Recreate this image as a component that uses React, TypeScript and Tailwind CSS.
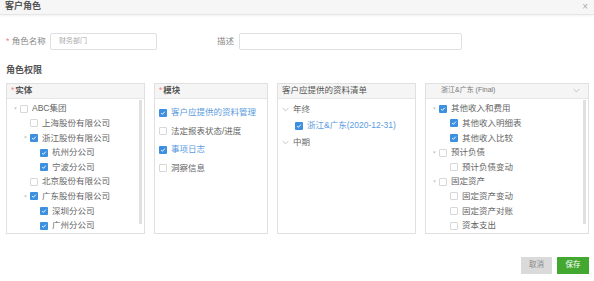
import React from "react";

type Node = { label: string; level: number; arrow?: boolean; checked?: boolean };

const entityTree: Node[] = [
  { label: "ABC集团", level: 0, arrow: true, checked: false },
  { label: "上海股份有限公司", level: 1, checked: false },
  { label: "浙江股份有限公司", level: 1, arrow: true, checked: true },
  { label: "杭州分公司", level: 2, checked: true },
  { label: "宁波分公司", level: 2, checked: true },
  { label: "北京股份有限公司", level: 1, checked: false },
  { label: "广东股份有限公司", level: 1, arrow: true, checked: true },
  { label: "深圳分公司", level: 2, checked: true },
  { label: "广州分公司", level: 2, checked: true },
];

const reportTree: Node[] = [
  { label: "其他收入和费用", level: 0, arrow: true, checked: true },
  { label: "其他收入明细表", level: 1, checked: true },
  { label: "其他收入比较", level: 1, checked: true },
  { label: "预计负债", level: 0, arrow: true, checked: false },
  { label: "预计负债变动", level: 1, checked: false },
  { label: "固定资产", level: 0, arrow: true, checked: false },
  { label: "固定资产变动", level: 1, checked: false },
  { label: "固定资产对账", level: 1, checked: false },
  { label: "资本支出", level: 1, checked: false },
];

const modules = [
  { label: "客户应提供的资料管理", checked: true },
  { label: "法定报表状态/进度", checked: false },
  { label: "事项日志", checked: true },
  { label: "洞察信息", checked: false },
];

function Check({ on }: { on: boolean }) {
  if (on) {
    return (
      <span className="w-[8px] h-[8px] rounded-[1px] bg-[#3d8fe0] flex items-center justify-center shrink-0">
        <svg width="6" height="6" viewBox="0 0 10 10">
          <path d="M2 5.2l2 2 4-4.4" stroke="#fff" strokeWidth="1.6" fill="none" />
        </svg>
      </span>
    );
  }
  return <span className="w-[8px] h-[8px] rounded-[1px] border border-[#d8d8d8] bg-white shrink-0" />;
}

function Caret() {
  return (
    <svg width="5" height="5" viewBox="0 0 10 10" className="shrink-0">
      <path d="M2 3l3 4 3-4z" fill="#c0c0c0" />
    </svg>
  );
}

function Chevron() {
  return (
    <svg width="7" height="5" viewBox="0 0 10 6" className="shrink-0">
      <path d="M1 1l4 4 4-4" stroke="#aaa" strokeWidth="1" fill="none" />
    </svg>
  );
}

function TreeRow({ n, indent }: { n: Node; indent: number }) {
  return (
    <div className="h-[14.6px] flex items-center" style={{ paddingLeft: n.level * indent }}>
      <span className="w-[10px] flex items-center justify-center">{n.arrow ? <Caret /> : null}</span>
      <Check on={!!n.checked} />
      <span className="ml-[4px] text-[8.5px] text-[#666] whitespace-nowrap">{n.label}</span>
    </div>
  );
}

function Scrollbar() {
  return <div className="absolute right-[2px] top-[16px] bottom-[9px] w-[3px] bg-[#e0e0e0]" />;
}

export default function App() {
  return (
    <div
      className="w-[594px] h-[281px] bg-white relative overflow-hidden text-[#666]"
      style={{ fontFamily: '"Liberation Sans", "Noto Sans CJK SC", sans-serif' }}
    >
      <div className="h-[15px] bg-[#f6f6f7] border-b border-[#e6e6e6] shadow-[0_1px_2px_rgba(0,0,0,0.06)] flex items-center justify-between px-[5px]">
        <span className="text-[9px] font-bold text-[#555]">客户角色</span>
        <span className="text-[10px] text-[#aaa] leading-none pr-[1px]">×</span>
      </div>

      <div className="flex items-center mt-[18px] h-[17px]">
        <span className="ml-[6px] text-[8.5px] text-[#888] w-[44px]">
          <span className="text-[#f08080]">* </span>角色名称
        </span>
        <div className="w-[107px] h-[17px] border border-[#e0e0e0] rounded-[2px] flex items-center pl-[8px] text-[7px] text-[#aaa]">
          财务部门
        </div>
        <span className="ml-[60px] text-[8.5px] text-[#888]">描述</span>
        <div className="ml-[5px] w-[223px] h-[17px] border border-[#e0e0e0] rounded-[2px]" />
      </div>

      <div className="ml-[6px] mt-[14px] text-[9px] font-bold text-[#555]">角色权限</div>

      <div className="flex ml-[6px] mt-[5px] gap-[9px] h-[151px]">
        <div className="w-[139px] border border-[#e0e0e0] relative">
          <div className="h-[15px] bg-[#f5f5f5] border-b border-[#e6e6e6] flex items-center px-[4px] text-[8.5px] font-bold text-[#555]">
            <span className="text-[#f08080] font-normal mr-[1px]">*</span>实体
          </div>
          <div className="pt-[3px] pl-[3px]">
            {entityTree.map((n) => (
              <TreeRow key={n.label} n={n} indent={10} />
            ))}
          </div>
          <Scrollbar />
        </div>

        <div className="w-[114px] border border-[#e0e0e0]">
          <div className="h-[15px] bg-[#f5f5f5] border-b border-[#e6e6e6] flex items-center px-[4px] text-[8.5px] font-bold text-[#555]">
            <span className="text-[#f08080] font-normal mr-[1px]">*</span>模块
          </div>
          <div className="pt-[5px] pl-[4px] flex flex-col">
            {modules.map((m) => (
              <div key={m.label} className="h-[18.5px] flex items-center">
                <Check on={m.checked} />
                <span className={`ml-[4px] text-[8.5px] whitespace-nowrap ${m.checked ? "text-[#5a9be0]" : "text-[#666]"}`}>
                  {m.label}
                </span>
              </div>
            ))}
          </div>
        </div>

        <div className="w-[139px] border border-[#e0e0e0]">
          <div className="h-[15px] bg-[#f5f5f5] border-b border-[#e6e6e6] flex items-center px-[4px] text-[8.5px] text-[#555]">
            客户应提供的资料清单
          </div>
          <div className="pt-[3px] pl-[4px]">
            <div className="h-[16px] flex items-center">
              <Chevron />
              <span className="ml-[4px] text-[8.5px]">年终</span>
            </div>
            <div className="h-[16px] flex items-center pl-[13px]">
              <Check on />
              <span className="ml-[4px] text-[8.5px] text-[#5a9be0] whitespace-nowrap">浙江&amp;广东(2020-12-31)</span>
            </div>
            <div className="h-[17px] flex items-center">
              <Chevron />
              <span className="ml-[4px] text-[8.5px]">中期</span>
            </div>
          </div>
        </div>

        <div className="w-[164px] border border-[#e0e0e0] relative">
          <div className="h-[15px] bg-[#f5f5f5] border-b border-[#e6e6e6] flex items-center justify-between pl-[15px] pr-[8px] text-[7px] text-[#777]">
            <span>浙江&amp;广东 (Final)</span>
            <Chevron />
          </div>
          <div className="pt-[3px] pl-[3px]">
            {reportTree.map((n) => (
              <TreeRow key={n.label} n={n} indent={11} />
            ))}
          </div>
          <Scrollbar />
        </div>
      </div>

      <div className="flex justify-end gap-[5px] mr-[5px] mt-[23px]">
        <button className="w-[31px] h-[17px] bg-[#dadada] text-[7.5px] text-[#888]">取消</button>
        <button className="w-[32px] h-[17px] bg-[#43a830] text-[7.5px] text-white">保存</button>
      </div>
    </div>
  );
}
